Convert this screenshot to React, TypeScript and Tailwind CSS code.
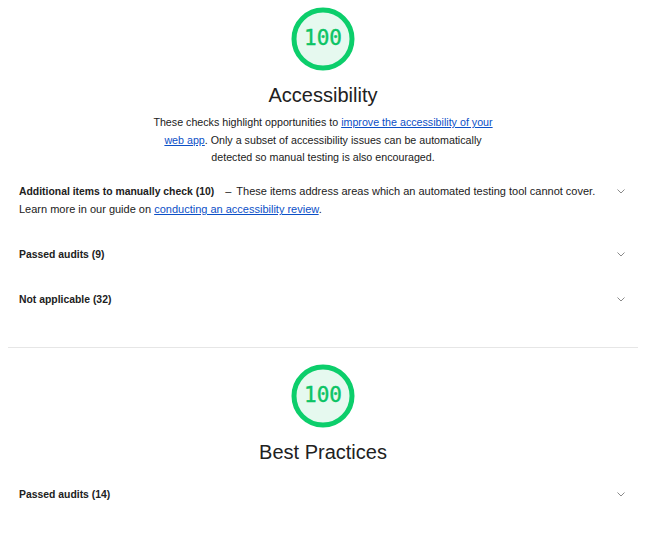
import React from "react";

function Gauge() {
  return (
    <div className="relative w-[64px] h-[64px] mx-auto">
      <svg viewBox="0 0 64 64" width={64} height={64} className="absolute inset-0">
        <circle cx={32} cy={32} r={29} fill="#e6f9ef" stroke="#0cce6b" strokeWidth={5} />
      </svg>
      <div className="absolute inset-0 flex items-center justify-center font-['DejaVu_Sans_Mono',monospace] text-[21px] text-[#0cc465] [-webkit-text-stroke:0.4px_#0cc465]">
        100
      </div>
    </div>
  );
}

function Chevron() {
  return (
    <svg viewBox="0 0 8 5" width={8} height={5} fill="none" stroke="#8a8a8a" strokeWidth={1}>
      <path d="M0.5 0.5l3.5 3.5 3.5-3.5" />
    </svg>
  );
}

function Row({ children }: { children: React.ReactNode }) {
  return (
    <div className="flex items-start py-[13.5px] pl-[11px] pr-[9px]">
      <div className="flex-1 text-[11px] leading-[18px] text-[#212121]">{children}</div>
      <div className="w-[16px] ml-[16px] h-[18px] flex items-center justify-center">
        <Chevron />
      </div>
    </div>
  );
}

function Label({ children }: { children: React.ReactNode }) {
  return <span className="font-bold text-[10.4px] leading-none">{children}</span>;
}

export default function App() {
  return (
    <div className="w-[653px] h-[534px] bg-white overflow-hidden font-['Liberation_Sans',Arial,sans-serif] text-[#212121]">
      <div className="pl-[8px] pr-[15px]">
        {/* Accessibility */}
        <section className="pt-[7px]">
          <Gauge />
          <h2 className="mt-[12px] text-center text-[20px] leading-[24px]">Accessibility</h2>
          <p className="mt-[7px] mx-auto max-w-[350px] text-center text-[10.7px] leading-[17.5px]">
            These checks highlight opportunities to{" "}
            <a className="text-[#0c50c7] underline">improve the accessibility of your web app</a>. Only a
            subset of accessibility issues can be automatically detected so manual testing is also
            encouraged.
          </p>
          <div className="mt-[2px]">
            <Row>
              <Label>Additional items to manually check (10)</Label>
              <span className="ml-[11px] mr-[5px]">–</span>
              These items address areas which an automated testing tool cannot cover. Learn more in our
              guide on <a className="text-[#0c50c7] underline">conducting an accessibility review</a>.
            </Row>
            <Row>
              <Label>Passed audits (9)</Label>
            </Row>
            <Row>
              <Label>Not applicable (32)</Label>
            </Row>
          </div>
        </section>

        <div className="mt-[25px] border-t border-[#e6e6e6]" />

        {/* Best Practices */}
        <section className="pt-[16px]">
          <Gauge />
          <h2 className="mt-[12px] text-center text-[20px] leading-[24px]">Best Practices</h2>
          <div className="mt-[8px]">
            <Row>
              <Label>Passed audits (14)</Label>
            </Row>
          </div>
        </section>
      </div>
    </div>
  );
}
